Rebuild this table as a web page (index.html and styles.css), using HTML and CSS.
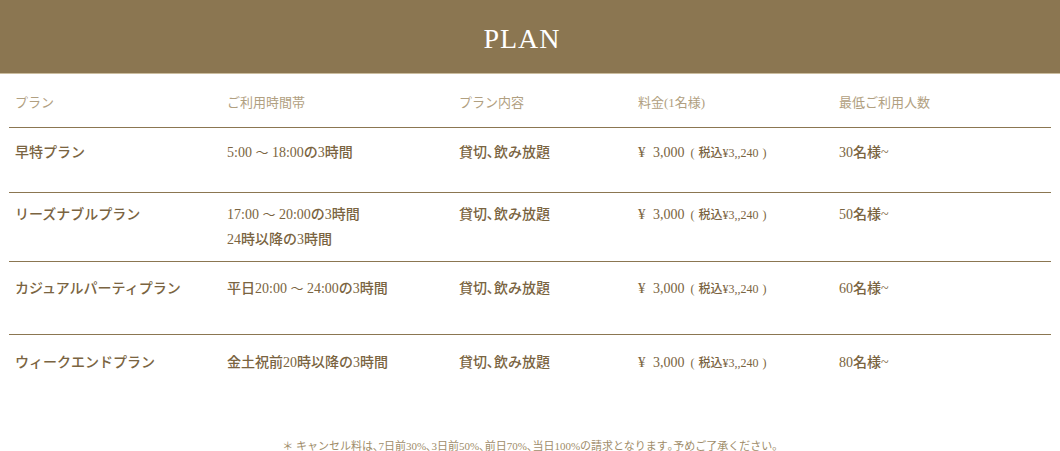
FILE: index.html
```html
<!DOCTYPE html>
<html lang="ja">
<head>
<meta charset="utf-8">
<title>PLAN</title>
<link rel="stylesheet" href="styles.css">
</head>
<body>
<header class="band"><h1 class="title">PLAN</h1></header>
<section class="plans">
  <div class="row head">
    <div>プラン</div>
    <div>ご利用時間帯</div>
    <div>プラン内容</div>
    <div>料金(1名様)</div>
    <div>最低ご利用人数</div>
  </div>
  <div class="row r1">
    <div>早特プラン</div>
    <div>5:00 <span class="tilde">〜</span> 18:00の3時間</div>
    <div>貸切､飲み放題</div>
    <div class="price"><span class="yen">¥</span>3,000<small>( 税込¥3,,240 )</small></div>
    <div>30名様~</div>
  </div>
  <div class="row r2">
    <div>リーズナブルプラン</div>
    <div>17:00 <span class="tilde">〜</span> 20:00の3時間<br>24時以降の3時間</div>
    <div>貸切､飲み放題</div>
    <div class="price"><span class="yen">¥</span>3,000<small>( 税込¥3,,240 )</small></div>
    <div>50名様~</div>
  </div>
  <div class="row r3">
    <div>カジュアルパーティプラン</div>
    <div>平日20:00 <span class="tilde">〜</span> 24:00の3時間</div>
    <div>貸切､飲み放題</div>
    <div class="price"><span class="yen">¥</span>3,000<small>( 税込¥3,,240 )</small></div>
    <div>60名様~</div>
  </div>
  <div class="row r4">
    <div>ウィークエンドプラン</div>
    <div>金土祝前20時以降の3時間</div>
    <div>貸切､飲み放題</div>
    <div class="price"><span class="yen">¥</span>3,000<small>( 税込¥3,,240 )</small></div>
    <div>80名様~</div>
  </div>
</section>
<p class="note">＊ キャンセル料は､7日前30%､3日前50%､前日70%､当日100%の請求となります｡予めご了承ください｡</p>
</body>
</html>
```
FILE: styles.css
```css
html, body {
  margin: 0;
  padding: 0;
  background: #fff;
}
body {
  font-family: "Liberation Serif", "Noto Sans CJK JP", serif;
  color: #7a6441;
}
.band {
  background: #8b7651;
  height: 73px;
  border-bottom: 1px solid #cbbd9f;
  display: flex;
  align-items: center;
  justify-content: center;
}
.title {
  margin: 0;
  padding: 4px 16px 0 0;
  color: #fff;
  font-weight: normal;
  font-size: 28px;
  letter-spacing: 1px;
  font-family: "Liberation Serif", serif;
}
.plans {
  margin: 0 9px;
}
.row {
  display: grid;
  grid-template-columns: 212px 232px 179px 201px 1fr;
  padding-left: 6px;
  font-size: 14px;
  line-height: 25px;
  font-weight: 500;
  border-bottom: 1px solid #8b7651;
  box-sizing: border-box;
}
.row.head {
  color: #b1a081;
  font-size: 13px;
  font-weight: normal;
  line-height: 20px;
  padding-top: 19px;
  height: 54px;
}
.row.r1 { padding-top: 12px; height: 65px; }
.row.r2 { padding-top: 9px; height: 69px; }
.row.r3 { padding-top: 14px; height: 73px; }
.row.r4 { padding-top: 15px; height: 72px; border-bottom: none; }
.tilde {
  font-weight: normal;
  font-size: 13px;
}
.yen {
  display: inline-block;
  width: 15px;
  font-size: 15px;
}
.price small {
  font-size: 12px;
  margin-left: 6px;
  word-spacing: 1px;
}
.note {
  margin: 31px 0 0;
  text-align: center;
  font-size: 11px;
  color: #a08d6a;
  line-height: 16px;
}
```
